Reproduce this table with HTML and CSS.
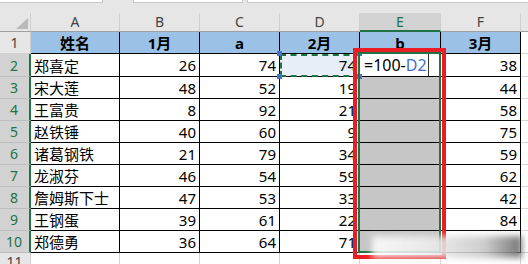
FILE: index.html
```html
<!DOCTYPE html>
<html lang="zh">
<head>
<meta charset="utf-8">
<link rel="stylesheet" href="styles.css">
</head>
<body>
<div class="app">
  <div class="topbar">
    <div class="box box-name"></div>
    <div class="gap1"></div>
    <div class="box box-mid"></div>
    <div class="gap2"></div>
    <div class="box box-formula"></div>
  </div>
  <div class="sheet">
    <div class="corner"><svg width="12" height="11" viewBox="0 0 12 11"><polygon points="12,0 12,11 0,11" fill="#b9b9b9"/></svg></div>
    <div class="ch">A</div><div class="ch">B</div><div class="ch">C</div><div class="ch">D</div><div class="ch ch-sel">E</div><div class="ch">F</div><div class="ch ch-last"></div>

    <div class="rh">1</div>
    <div class="c hd">姓名</div><div class="c hd">1月</div><div class="c hd">a</div><div class="c hd">2月</div><div class="c hd">b</div><div class="c hd">3月</div><div class="g"></div>

    <div class="rh sel">2</div>
    <div class="c t">郑喜定</div><div class="c n">26</div><div class="c n">74</div><div class="c n ref">74</div><div class="c edit"><span class="editor">=100-<span class="blue">D2</span></span></div><div class="c n">38</div><div class="g"></div>

    <div class="rh sel">3</div>
    <div class="c t">宋大莲</div><div class="c n">48</div><div class="c n">52</div><div class="c n">19</div><div class="c gr"></div><div class="c n">44</div><div class="g"></div>

    <div class="rh sel">4</div>
    <div class="c t">王富贵</div><div class="c n">8</div><div class="c n">92</div><div class="c n">21</div><div class="c gr"></div><div class="c n">58</div><div class="g"></div>

    <div class="rh sel">5</div>
    <div class="c t">赵铁锤</div><div class="c n">40</div><div class="c n">60</div><div class="c n">9</div><div class="c gr"></div><div class="c n">75</div><div class="g"></div>

    <div class="rh sel">6</div>
    <div class="c t">诸葛钢铁</div><div class="c n">21</div><div class="c n">79</div><div class="c n">34</div><div class="c gr"></div><div class="c n">59</div><div class="g"></div>

    <div class="rh sel">7</div>
    <div class="c t">龙淑芬</div><div class="c n">46</div><div class="c n">54</div><div class="c n">59</div><div class="c gr"></div><div class="c n">62</div><div class="g"></div>

    <div class="rh sel">8</div>
    <div class="c t">詹姆斯下士</div><div class="c n">47</div><div class="c n">53</div><div class="c n">33</div><div class="c gr"></div><div class="c n">42</div><div class="g"></div>

    <div class="rh sel">9</div>
    <div class="c t">王钢蛋</div><div class="c n">39</div><div class="c n">61</div><div class="c n">22</div><div class="c gr"></div><div class="c n">84</div><div class="g"></div>

    <div class="rh sel">10</div>
    <div class="c t">郑德勇</div><div class="c n">36</div><div class="c n">64</div><div class="c n">71</div><div class="c gr"></div><div class="c n"></div><div class="g"></div>

    <div class="rh rh-last">11</div>
    <div class="e"></div><div class="e"></div><div class="e"></div><div class="e"></div><div class="e"></div><div class="e"></div><div class="g"></div>
  </div>

  <div class="ref-box"></div>
  <div class="handle h1"></div><div class="handle h2"></div><div class="handle h3"></div><div class="handle h4"></div>
  <div class="sel-box"></div>
  <div class="red-box"></div>
  <div class="blur"></div>
</div>
</body>
</html>
```

FILE: styles.css
```css
* { box-sizing: border-box; }
html, body { margin: 0; padding: 0; }
body {
  width: 528px; height: 264px; overflow: hidden;
  background: #e6e6e6;
  font-family: "Noto Sans", "Noto Sans CJK SC", sans-serif;
}
.app { position: relative; width: 528px; height: 264px; overflow: hidden; }
.topbar { display: flex; height: 13px; background: #e6e6e6; }
.box { height: 3px; background: #fff; border-bottom: 1px solid #c6c6c6; border-left: 1px solid #c6c6c6; border-right: 1px solid #c6c6c6; }
.box-name { width: 103px; border-left: none; }
.gap1 { width: 30px; }
.box-mid { width: 110px; }
.gap2 { width: 4px; }
.box-formula { flex: 1; border-right: none; }

.sheet {
  display: grid;
  grid-template-columns: 31px 89px 80px 80px 80px 81px 80px 7px;
  grid-template-rows: 19px 22px 23px repeat(8, 22px) 22px;
  background: #fff;
}
.corner {
  background: #e6e6e6;
  border-right: 1px solid #cfcfcf;
  border-bottom: 1px solid #9f9f9f;
  display: flex; align-items: flex-end; justify-content: flex-end;
  padding: 0 2px 2px 0;
}
.corner svg { display: block; }
.ch {
  background: #e6e6e6;
  border-right: 1px solid #cfcfcf;
  border-bottom: 1px solid #9f9f9f;
  color: #444;
  font-size: 14px;
  line-height: 18px;
  text-align: center;
}
.ch-sel { background: #d2d2d2; color: #217346; border-bottom: 2px solid #217346; }
.ch-last { border-right: none; }

.rh {
  background: #e6e6e6;
  border-right: 1px solid #cfcfcf;
  border-bottom: 1px solid #cfcfcf;
  color: #444;
  font-size: 14px;
  text-align: center;
  display: flex; align-items: center; justify-content: center;
  padding-right: 1px;
}
.rh.sel { background: #d2d2d2; color: #217346; border-right: 2px solid #217346; border-bottom-color: #bdbdbd; }
.rh-last { align-items: flex-start; padding-top: 1px; line-height: 16px; }

.c {
  border-right: 1px solid #000;
  border-bottom: 1px solid #000;
  font-size: 15px;
  color: #000;
  display: flex; align-items: center;
  white-space: nowrap; overflow: hidden;
}
.hd { background: #9bc2e6; justify-content: center; font-weight: bold; }
.t { padding-left: 3px; font-family: "Noto Sans CJK SC", sans-serif; }
.n { justify-content: flex-end; padding-right: 3px; }
.ref { background: #e8eef8; }
.gr { background: #c6c6c6; }
.edit { background: #fff; }
.editor {
  display: flex; align-items: center;
  height: 100%;
  width: 69px;
  padding-left: 4px;
  border-right: 1px solid #333;
  font-size: 16px;
}
.blue { color: #3f6fd0; }
.g { border-bottom: 1px solid #d4d4d4; }
.e { border-right: 1px solid #d4d4d4; }

.ref-box {
  position: absolute; left: 280px; top: 54px; width: 80px; height: 23px;
  border: 2px dashed #217346;
}
.handle { position: absolute; width: 5px; height: 5px; background: #4472c4; }
.h1 { left: 277px; top: 51px; }
.h2 { left: 277px; top: 74px; }
.h3 { left: 357px; top: 51px; }
.h4 { left: 357px; top: 74px; }
.sel-box {
  position: absolute; left: 358px; top: 52px; width: 83px; height: 201px;
  border: 2px solid #217346;
}
.red-box {
  position: absolute; left: 353px; top: 48px; width: 93px; height: 211px;
  border: 4px solid #ea1c24;
}
.blur {
  position: absolute; left: 372px; top: 236px; width: 150px; height: 22px;
  background: linear-gradient(90deg, rgba(255,255,255,0.85), rgba(235,235,235,0.9) 40%, rgba(200,200,200,0.9) 75%, rgba(110,110,110,0.95));
  filter: blur(3px);
}
```
